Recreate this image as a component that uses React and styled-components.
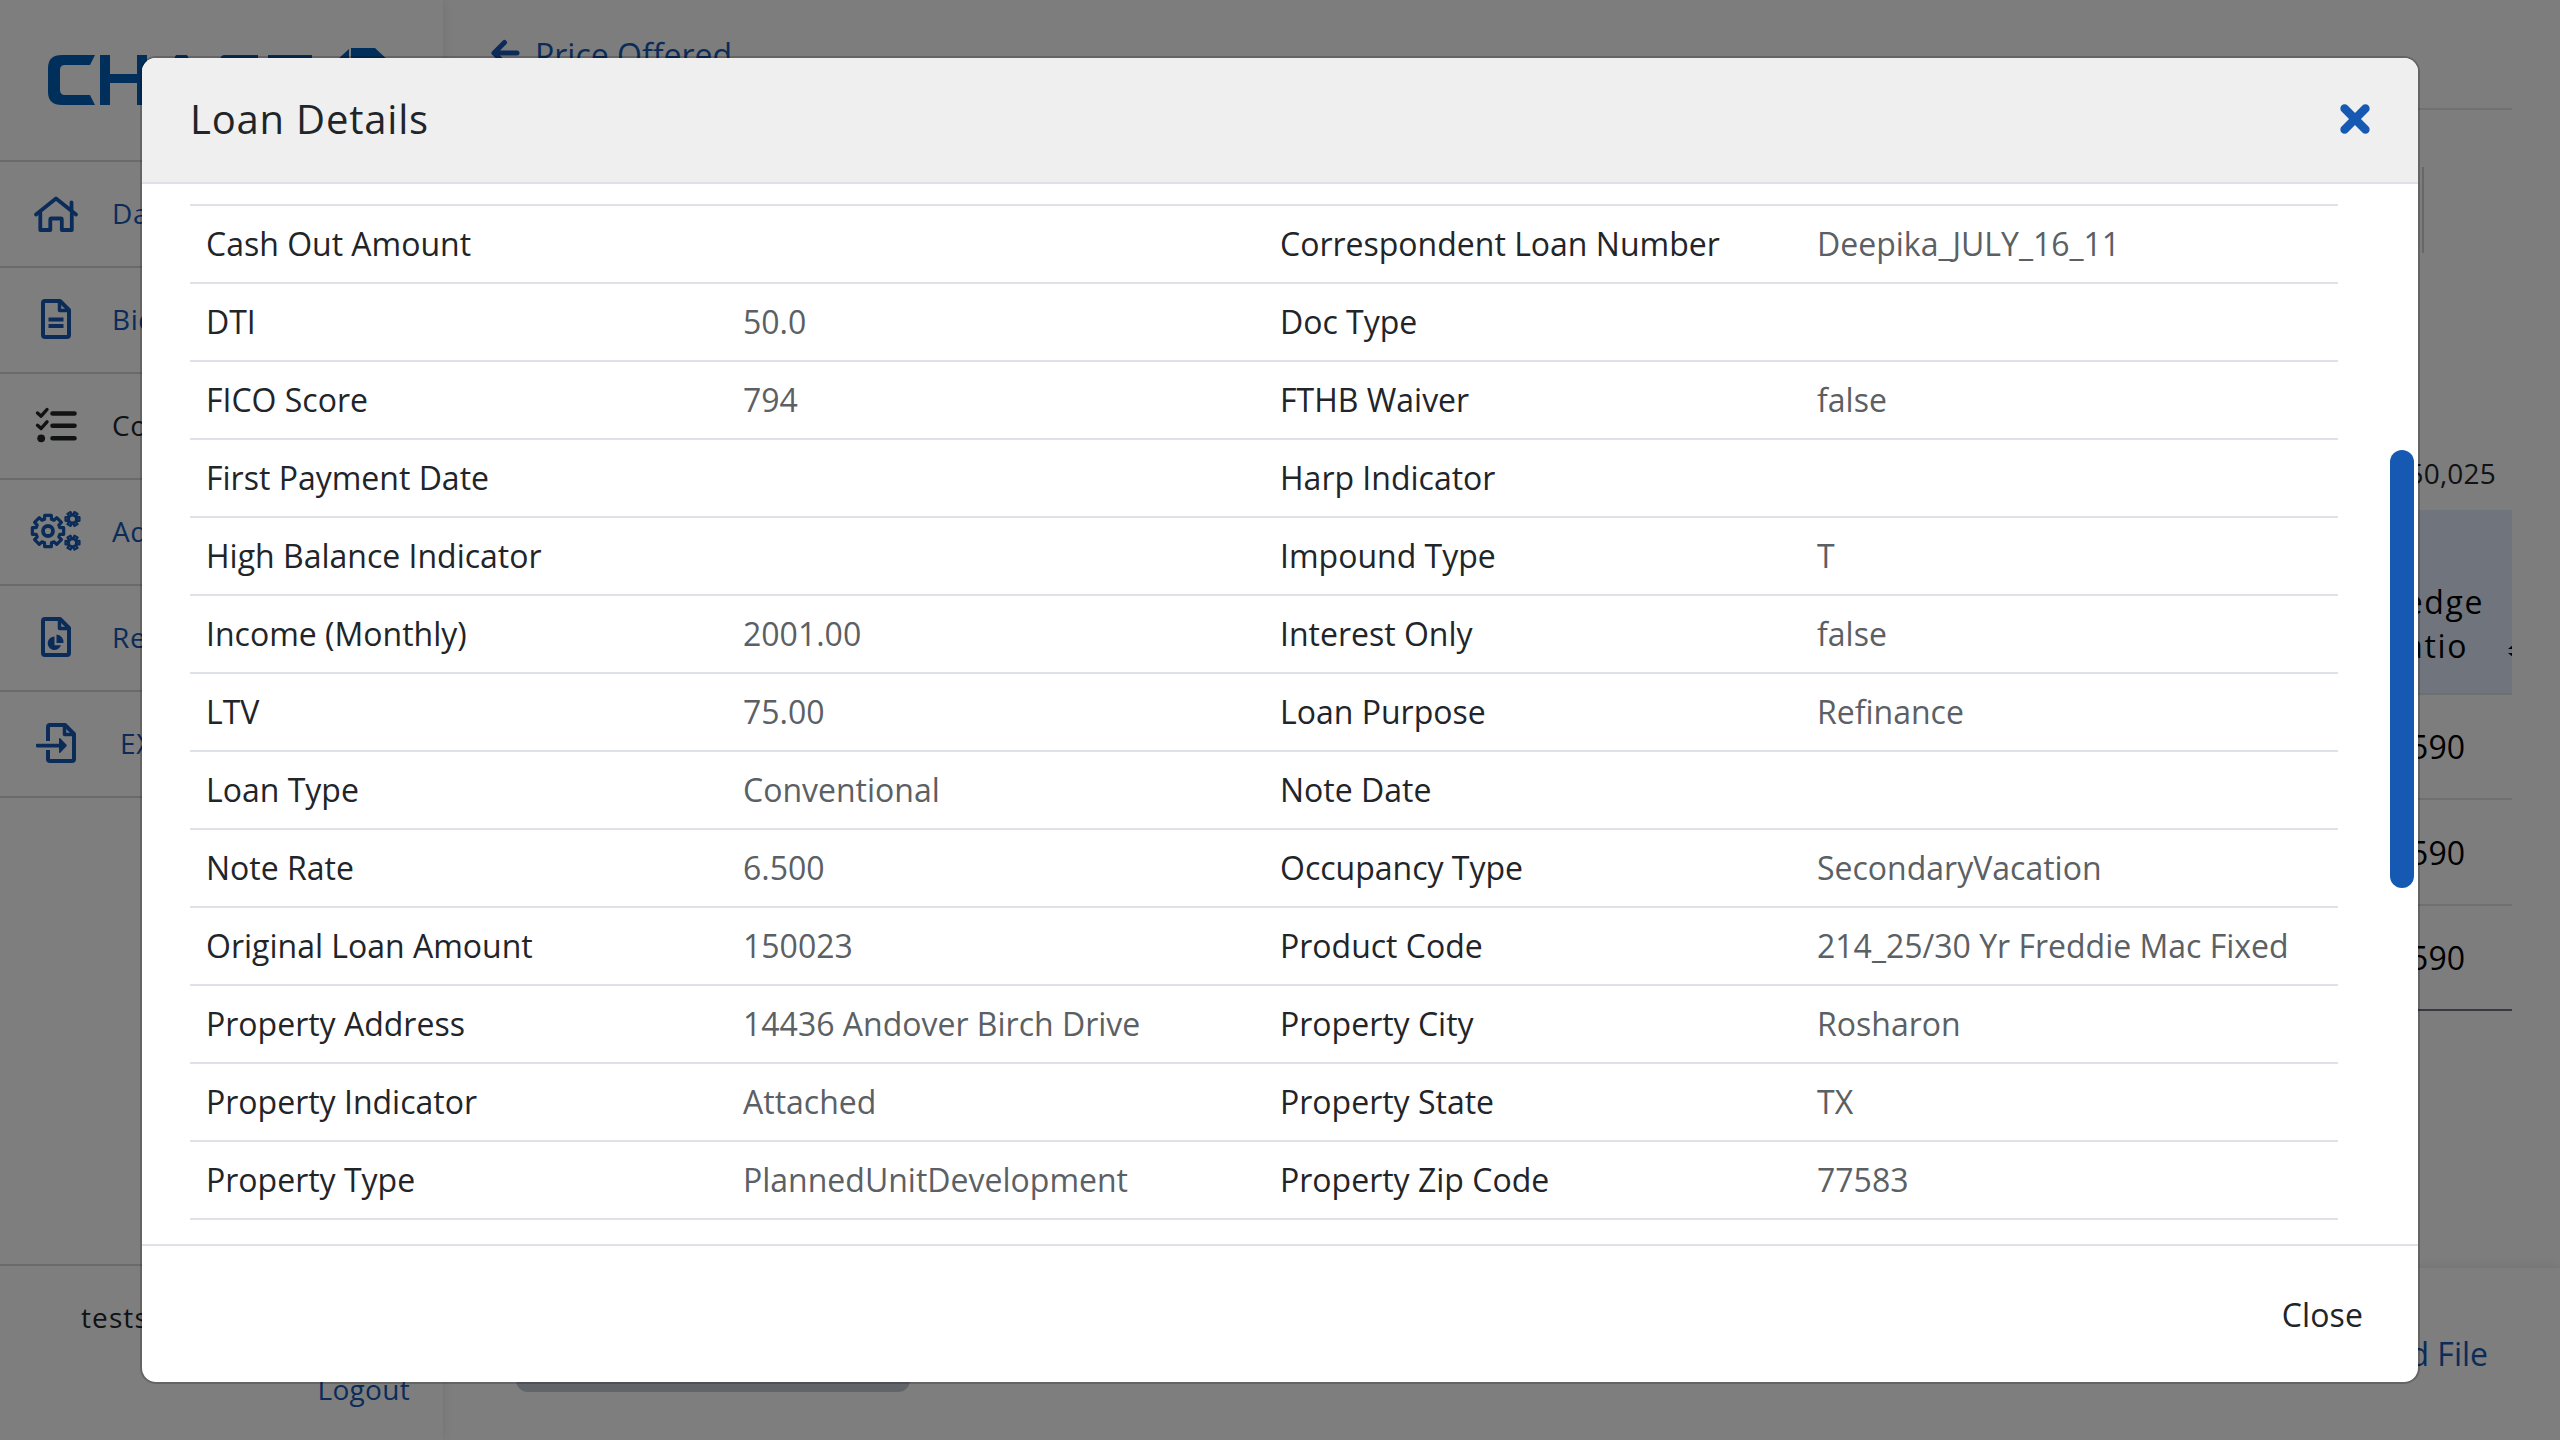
import React from "react";
import styled, { createGlobalStyle } from "styled-components";

const BLUE = "#1659b3";

const Global = createGlobalStyle`
  * { box-sizing: border-box; }
  body { margin: 0; font-family: "Open Sans", "Noto Sans", sans-serif; color: #212529; font-size: 32px; overflow: hidden; background: #fbfbfb; }
`;

const Page = styled.div`
  position: relative;
  width: 2560px;
  height: 1440px;
  display: flex;
  overflow: hidden;
  background: #fbfbfb;
`;

const Sidebar = styled.aside`
  width: 443px;
  flex: none;
  display: flex;
  flex-direction: column;
  background: #fdfdfd;
  box-shadow: 0 0 12px rgba(0, 0, 0, 0.1);
  z-index: 1;
`;

const LogoBox = styled.div`
  height: 160px;
  padding: 48px 0 0 48px;
  svg { display: block; }
`;

const Nav = styled.nav`
  display: flex;
  flex-direction: column;
  border-bottom: 2px solid #d4d4d4;
`;

const NavItem = styled.a`
  height: 106px;
  border-top: 2px solid #d4d4d4;
  display: flex;
  align-items: center;
  gap: 28px;
  padding: 0 0 2px 28px;
  font-size: 28px;
  letter-spacing: 0.6px;
  color: ${(p) => (p.$active ? "#212529" : BLUE)};
  svg { display: block; flex: none; }
  span { padding-left: ${(p) => p.$indent || 0}px; }
`;

const UserBox = styled.div`
  margin-top: auto;
  height: 176px;
  border-top: 2px solid #d4d4d4;
  padding: 32px 33px 0 81px;
  display: flex;
  flex-direction: column;
  font-size: 28px;
  line-height: 38px;
`;

const UserName = styled.div`
  letter-spacing: 1.1px;
`;

const Logout = styled.a`
  align-self: flex-end;
  margin-top: 34px;
  color: ${BLUE};
  letter-spacing: 0.3px;
`;

const Main = styled.main`
  flex: 1;
  display: flex;
  flex-direction: column;
`;

const Content = styled.div`
  flex: 1;
  display: flex;
  flex-direction: column;
  padding: 0 48px 0 47px;
`;

const BackBar = styled.div`
  height: 110px;
  border-bottom: 2px solid #e2e2e2;
  padding-top: 33px;
  display: flex;
  align-items: flex-start;
  gap: 15px;
  color: ${BLUE};
  line-height: 44px;
  svg { margin-top: 6px; }
`;

const Summary = styled.div`
  height: 86px;
  margin: 57px 88px 0 0;
  border-right: 2px solid #cfcfcf;
`;

const Total = styled.div`
  margin-top: 201px;
  height: 56px;
  padding-right: 16px;
  text-align: right;
  font-size: 28px;
  line-height: 38px;
  letter-spacing: 0.2px;
`;

const TableHead = styled.div`
  height: 183px;
  background: #e0ebfb;
  display: flex;
  justify-content: flex-end;
  align-items: flex-end;
  padding-bottom: 25px;
  font-size: 32px;
  line-height: 44px;
  letter-spacing: 1.6px;
  color: #000;
  overflow: hidden;
`;

const HeadLabel = styled.div`
  display: flex;
  flex-direction: column;
  align-items: flex-end;
  margin-right: 24px;
  span + span { margin-right: 16px; }
`;

const SortMark = styled.svg`
  flex: none;
  width: 22px;
  height: 14px;
  margin: 0 -18px 10px 0;
`;

const TableRow = styled.div`
  height: ${(p) => p.$h}px;
  border-top: 2px solid #dcdfe2;
  padding-right: 47px;
  display: flex;
  justify-content: flex-end;
  align-items: center;
  color: #000;
`;

const TableEnd = styled.div`
  height: 2px;
  background: #6c757d;
`;

const ActionBar = styled.footer`
  height: 172px;
  display: flex;
  justify-content: space-between;
  background: #fdfdfd;
  box-shadow: 0 0 14px rgba(0, 0, 0, 0.1);
  padding: 34px 72px 0 73px;
`;

const Primary = styled.button`
  width: 394px;
  height: 90px;
  border: 0;
  border-radius: 12px;
  background: #c3cbd2;
`;

const FileLink = styled.a`
  color: ${BLUE};
  padding-top: 30px;
  line-height: 44px;
`;

const Backdrop = styled.div`
  position: absolute;
  inset: 0;
  z-index: 5;
  padding: 56px 140px;
  background: rgba(0, 0, 0, 0.5);
`;

const Modal = styled.section`
  width: 2280px;
  height: 1328px;
  border: 2px solid rgba(0, 0, 0, 0.2);
  border-radius: 16px;
  background: #fff;
  background-clip: padding-box;
  display: flex;
  flex-direction: column;
  overflow: hidden;
`;

const ModalHeader = styled.header`
  height: 126px;
  flex: none;
  display: flex;
  justify-content: space-between;
  align-items: center;
  padding: 0 47px 2px 48px;
  background: #efefef;
  border-bottom: 2px solid #dee2e6;
`;

const Title = styled.h2`
  margin: 0;
  font-size: 40px;
  font-weight: 400;
  line-height: 60px;
  letter-spacing: 0.8px;
`;

const ModalBody = styled.div`
  flex: 1;
  display: flex;
  justify-content: space-between;
  padding: 20px 4px 0 48px;
`;

const Details = styled.div`
  width: 2148px;
  border-bottom: 2px solid #dee2e6;
  align-self: flex-start;
`;

const DetailRow = styled.div`
  display: grid;
  grid-template-columns: repeat(4, 537px);
  height: 78px;
  border-top: 2px solid #dee2e6;
  line-height: 76px;
`;

const Label = styled.div`
  padding-left: 16px;
  white-space: nowrap;
`;

const Value = styled(Label)`
  color: #5b6065;
`;

const ScrollThumb = styled.div`
  width: 24px;
  height: 438px;
  margin-top: 246px;
  border-radius: 12px;
  background: ${BLUE};
`;

const ModalFooter = styled.footer`
  height: 138px;
  flex: none;
  border-top: 2px solid #dee2e6;
  display: flex;
  align-items: center;
  justify-content: flex-end;
  padding-right: 55px;
`;

const CloseButton = styled.button`
  border: 0;
  padding: 0;
  background: none;
  font: inherit;
  color: inherit;
  letter-spacing: 0.1px;
`;

const HomeIcon = () => (
  <svg width="56" height="40" viewBox="0 0 56 40" fill="none" stroke="currentColor" strokeWidth="3.800" strokeLinecap="round" strokeLinejoin="round">
    <path d="M8 21.500 28 5.500l20 16M43.500 9.500v8" />
    <path d="M12.300 20v17h10v-10.500q0-1 1-1h9.500q1 0 1 1V37h10V20" />
  </svg>
);

const FileIcon = ({ kind }) => (
  <svg width="56" height="40" viewBox="0 0 56 40">
    <g fill="none" stroke="currentColor" strokeWidth="4" strokeLinejoin="round" transform={kind === "import" ? "translate(5 0)" : undefined}>
      {kind === "import"
        ? <path d="M15 18V4q0-2 2-2h15l9 9v25q0 2-2 2H17q-2 0-2-2v-9" />
        : <path d="M15 4q0-2 2-2h15l9 9v25q0 2-2 2H17q-2 0-2-2z" />}
      <path d="M31.500 2v9.500H41" strokeWidth="3.500" />
    </g>
    {kind === "text" && <path d="M20.500 20.500h15M20.500 27h15" stroke="currentColor" strokeWidth="4" />}
    {kind === "pie" && <path d="M26.500 19.500a6.800 6.800 0 1 0 6.500 8.700h-6.500zM28.500 17.500v8.500h7a7.500 7.500 0 0 0-7-8.500z" fill="currentColor" />}
    {kind === "import" && <path d="M9 20.800h22v-5.300q.5-1 1.500 0l6 6.200q.6.800 0 1.600l-6 6.200q-1 1-1.500 0v-5H9q-1-.2-1-1.200v-1.500q0-.8 1-1z" fill="currentColor" />}
  </svg>
);

const TasksIcon = () => (
  <svg width="56" height="40" viewBox="0 0 56 40">
    <path d="M24.500 8.500h22M24.500 20.800h22M24.500 33.300h22" stroke="currentColor" strokeWidth="4.600" strokeLinecap="round" />
    <path d="m9.500 8 3.600 3.200L19 4.500M9.500 20.300l3.600 3.200L19 16.800" fill="none" stroke="currentColor" strokeWidth="3.400" strokeLinecap="round" strokeLinejoin="round" />
    <circle cx="13.200" cy="33.300" r="3.900" fill="currentColor" />
  </svg>
);

const gearPath = (cx, cy, n, ri, ro, w, twist = 0) => {
  const pts = [];
  for (let i = 0; i < n; i++) {
    const a = ((i + twist) * 2 * Math.PI) / n;
    [[-w * 1.35, ri], [-w, ro], [w, ro], [w * 1.35, ri]].forEach(([d, r]) => {
      pts.push(`${(cx + r * Math.sin(a + d)).toFixed(2)} ${(cy - r * Math.cos(a + d)).toFixed(2)}`);
    });
  }
  return `M${pts.join("L")}Z`;
};

const CogsIcon = () => (
  <svg width="56" height="40" viewBox="0 0 56 40" fill="none" stroke="currentColor" strokeLinejoin="round">
    <path d={gearPath(20, 20, 8, 12.300, 16, 0.210)} strokeWidth="3.200" />
    <circle cx="20" cy="20" r="5" strokeWidth="3.800" />
    <path d={gearPath(44.500, 8, 6, 4.800, 7.200, 0.250, 0.5)} strokeWidth="2.200" />
    <circle cx="44.500" cy="8" r="4" strokeWidth="3" />
    <path d={gearPath(44.500, 31.700, 6, 4.800, 7.200, 0.250, 0.5)} strokeWidth="2.200" />
    <circle cx="44.500" cy="31.700" r="4" strokeWidth="3" />
  </svg>
);

const Logo = () => (
  <svg width="350" height="64" viewBox="0 0 350 64" fill="#005fb8">
    <path d="M12 7h35l-5 10H17q-5 0-5 5v20q0 5 5 5h25l5 10H14Q0 57 0 44V20Q0 7 14 7z" />
    <path d="M52 7h10v19h27V7h10v50H89V35H62v22H52z" />
    <path d="M128 7h11l28 50h-12L133 17l-20 40h-12z" />
    <path d="M176 7h34v10h-28v10h30v30h-40V47h30V36h-30V14q0-7 4-7z" />
    <path d="M220 7h44v10h-32v10h28v9h-28v11h32v10h-44z" />
    <path d="M303 0h24l17 16h-41zM301 1v22h-12V12zM338 20v20l-10 8V20zM289 28v18l14 14h18V48h-20z" />
  </svg>
);

const NAV = [
  { label: "Dashboard", icon: <HomeIcon /> },
  { label: "Bids", icon: <FileIcon kind="text" /> },
  { label: "Commitments", icon: <TasksIcon />, active: true },
  { label: "Admin", icon: <CogsIcon /> },
  { label: "Reports", icon: <FileIcon kind="pie" /> },
  { label: "EXIT", icon: <FileIcon kind="import" />, indent: 8 },
];

const ROWS = [
  ["Cash Out Amount", "", "Correspondent Loan Number", "Deepika_JULY_16_11"],
  ["DTI", "50.0", "Doc Type", ""],
  ["FICO Score", "794", "FTHB Waiver", "false"],
  ["First Payment Date", "", "Harp Indicator", ""],
  ["High Balance Indicator", "", "Impound Type", "T"],
  ["Income (Monthly)", "2001.00", "Interest Only", "false"],
  ["LTV", "75.00", "Loan Purpose", "Refinance"],
  ["Loan Type", "Conventional", "Note Date", ""],
  ["Note Rate", "6.500", "Occupancy Type", "SecondaryVacation"],
  ["Original Loan Amount", "150023", "Product Code", "214_25/30 Yr Freddie Mac Fixed"],
  ["Property Address", "14436 Andover Birch Drive", "Property City", "Rosharon"],
  ["Property Indicator", "Attached", "Property State", "TX"],
  ["Property Type", "PlannedUnitDevelopment", "Property Zip Code", "77583"],
];

export default function App() {
  return (
    <Page>
      <Global />
      <Sidebar>
        <LogoBox><Logo /></LogoBox>
        <Nav>
          {NAV.map((n) => (
            <NavItem key={n.label} $active={n.active} $indent={n.indent}>
              {n.icon}
              <span>{n.label}</span>
            </NavItem>
          ))}
        </Nav>
        <UserBox>
          <UserName>testseller</UserName>
          <Logout>Logout</Logout>
        </UserBox>
      </Sidebar>
      <Main>
        <Content>
          <BackBar>
            <svg width="30" height="28" viewBox="0 0 30 28" fill="none" stroke="currentColor" strokeWidth="5" strokeLinecap="round" strokeLinejoin="round">
              <path d="M14.500 3.500 4 14l10.500 10.500M4 14h23" />
            </svg>
            <span>Price Offered</span>
          </BackBar>
          <Summary />
          <Total>$150,025</Total>
          <TableHead>
            <HeadLabel>
              <span>Hedge</span>
              <span>Ratio</span>
            </HeadLabel>
            <SortMark viewBox="0 0 22 14"><path d="M0 5 6 0h10l6 5zM0 9l6 5h10l6-5z" /></SortMark>
          </TableHead>
          <TableRow $h={105}>590</TableRow>
          <TableRow $h={106}>590</TableRow>
          <TableRow $h={105}>590</TableRow>
          <TableEnd />
        </Content>
        <ActionBar>
          <Primary />
          <FileLink>Download File</FileLink>
        </ActionBar>
      </Main>
      <Backdrop>
        <Modal>
          <ModalHeader>
            <Title>Loan Details</Title>
            <svg width="32" height="32" viewBox="0 0 32 32" stroke={BLUE} strokeWidth="8.500" strokeLinecap="round">
              <path d="m5.600 5.600 20.800 20.800M26.400 5.600 5.600 26.400" />
            </svg>
          </ModalHeader>
          <ModalBody>
            <Details>
              {ROWS.map(([a, b, c, d]) => (
                <DetailRow key={a}>
                  <Label>{a}</Label>
                  <Value>{b}</Value>
                  <Label>{c}</Label>
                  <Value>{d}</Value>
                </DetailRow>
              ))}
            </Details>
            <ScrollThumb />
          </ModalBody>
          <ModalFooter>
            <CloseButton>Close</CloseButton>
          </ModalFooter>
        </Modal>
      </Backdrop>
    </Page>
  );
}
